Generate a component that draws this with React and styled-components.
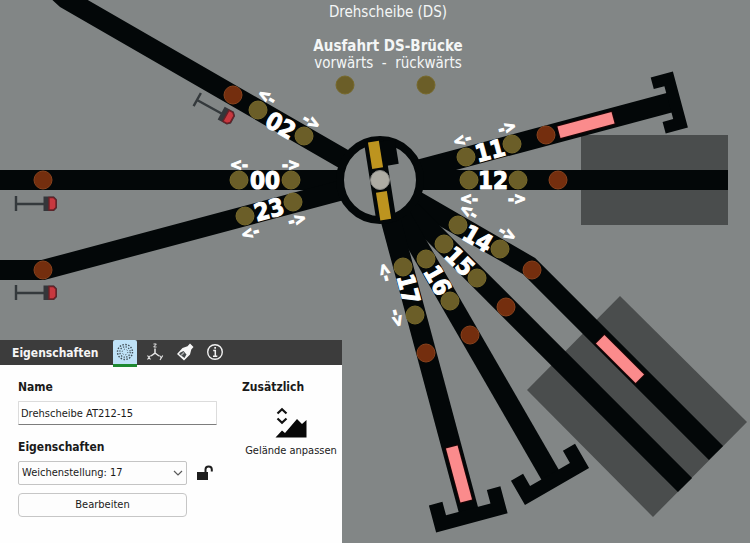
import React from 'react'
import styled, { createGlobalStyle } from 'styled-components'


const CENTER = { x: 380, y: 180 }

const tracks = [
  '52,-14 66,-1 380,180',
  '0,180 380,180',
  '0,270 43,270 380,180',
  '380,180 672,102',
  '380,180 728,180',
  '380,180 529,266 716,453',
  '380,180 685,485',
  '380,180 552,478',
  '380,180 469,512',
]

const greenSpots = [
  [345, 85], [426, 85],
  [258, 110], [304, 136],
  [239, 180], [291, 180],
  [245, 216], [293, 202],
  [466, 157], [512, 144],
  [469, 180], [518, 180],
  [458, 225], [500, 249],
  [444, 244], [477, 278],
  [426, 259], [450, 301],
  [403, 267], [415, 315],
]

const redSpots = [
  [233, 95], [43, 180], [43, 270], [546, 135], [558, 180],
  [532, 270], [506, 307], [470, 335], [426, 353],
]

const numbers = [
  { text: '02', x: 281, y: 125, turn: 30 },
  { text: '00', x: 265, y: 180, turn: 0 },
  { text: '23', x: 269, y: 209, turn: -15 },
  { text: '11', x: 490, y: 150, turn: -15 },
  { text: '12', x: 493, y: 180, turn: 0 },
  { text: '14', x: 478, y: 238, turn: 30 },
  { text: '15', x: 460, y: 261, turn: 45 },
  { text: '16', x: 438, y: 280, turn: 60 },
  { text: '17', x: 409, y: 289, turn: 75 },
]

const arrows = [
  { text: '<-', x: 267, y: 96, turn: 30 },
  { text: '->', x: 312, y: 121, turn: 30 },
  { text: '<-', x: 239, y: 164, turn: 0 },
  { text: '->', x: 291, y: 164, turn: 0 },
  { text: '<-', x: 250, y: 232, turn: -15 },
  { text: '->', x: 297, y: 219, turn: -15 },
  { text: '<-', x: 462, y: 139, turn: -15 },
  { text: '->', x: 507, y: 127, turn: -15 },
  { text: '<-', x: 469, y: 198, turn: 0 },
  { text: '->', x: 517, y: 198, turn: 0 },
  { text: '<-', x: 469, y: 211, turn: 30 },
  { text: '->', x: 508, y: 233, turn: 30 },
  { text: '<-', x: 386, y: 272, turn: 75 },
  { text: '->', x: 398, y: 318, turn: 75 },
]

const wagons = [
  { x: 586, y: 125, turn: -15 },
  { x: 620, y: 359, turn: 45 },
  { x: 459, y: 474, turn: 75 },
]

const signals = [
  { x: 16, y: 204, turn: 0 },
  { x: 16, y: 293, turn: 0 },
  { x: 197, y: 100, turn: 29 },
]

// end of a track: d is the distance from the turntable, half the width of the bar
function Buffer({ turn, d, half, lip, thick }) {
  const path = `M${d - lip} ${-half}H${d}V${half}H${d - lip}V${half - thick}H${d - thick}V${thick - half}H${d - lip}Z`
  return <path d={path} fill='#030708' transform={`translate(${CENTER.x} ${CENTER.y}) rotate(${turn})`} />
}

function Signal({ x, y, turn }) {
  return (
    <g transform={`translate(${x} ${y}) rotate(${turn})`}>
      <path d='M0 -8V7M0 0H28' stroke='#34393c' strokeWidth='2.4' fill='none' />
      <path d='M27.500 -7.500H38L41 -4.500V4L38 7H27.500Z' fill='#34363a' />
      <path d='M33 -6.500H37.500L40 -4V3.500L37.500 6H33Z' fill='#c8383f' stroke='#6b2026' strokeWidth='1.400' />
    </g>
  )
}

function Turntable() {
  return (
    <g transform={`translate(${CENTER.x} ${CENTER.y})`}>
      <circle r='40' fill='#828686' stroke='#030708' strokeWidth='8' />
      <g transform='rotate(-9)'>
        <rect x='-10' y='-40' width='20' height='80' fill='#030708' />
        <rect x='5' y='-38' width='16' height='25' fill='#030708' />
        <rect x='-6' y='-39' width='11' height='27' fill='#bd941f' />
        <rect x='-6' y='12' width='11' height='28' fill='#bd941f' />
      </g>
      <circle r='9.500' fill='#aeaca4' stroke='#8a8985' strokeWidth='1' />
    </g>
  )
}

function TrackPlan() {
  return (
    <Plan viewBox='0 0 750 543'>
      <rect x='581' y='135' width='147' height='90' fill='#4a4d4d' />
      <polygon points='620,296 747,422 653,517 527,390' fill='#4a4d4d' />
      {tracks.map((points) => (
        <Rail key={points} points={points} />
      ))}
      <Buffer turn={-15} d={311} half={29} lip={23} thick={12} />
      <Buffer turn={60} d={354} half={37} lip={28} thick={14} />
      <Buffer turn={75} d={355} half={37} lip={28} thick={14} />
      <Turntable />
      {wagons.map((w) => (
        <rect
          key={w.x} x='-28' y='-6' width='56' height='12' fill='#fb8b8c' stroke='#1f0506' strokeWidth='2'
          paintOrder='stroke' transform={`translate(${w.x} ${w.y}) rotate(${w.turn})`}
        />
      ))}
      {redSpots.map(([x, y]) => (
        <circle key={`${x}-${y}`} cx={x} cy={y} r='9' fill='#742e0e' stroke='#87421d' strokeWidth='1' />
      ))}
      {greenSpots.map(([x, y]) => (
        <circle key={`${x}-${y}`} cx={x} cy={y} r='9' fill='#6b5e28' stroke='#77692b' strokeWidth='1' />
      ))}
      {signals.map((s) => (
        <Signal key={`${s.x}-${s.y}`} {...s} />
      ))}
      {numbers.map((n) => (
        <Marking key={n.text} $size={24} y='9' transform={`translate(${n.x} ${n.y}) rotate(${n.turn})`}>
          {n.text}
        </Marking>
      ))}
      {arrows.map((a) => (
        <Marking key={`${a.x}-${a.y}`} $size={16} y='6' transform={`translate(${a.x} ${a.y}) rotate(${a.turn})`}>
          {a.text}
        </Marking>
      ))}
      <PlanText $size={15} x='388' y='17'>Drehscheibe (DS)</PlanText>
      <PlanText $size={15} $bold x='388' y='51'>Ausfahrt DS-Brücke</PlanText>
      <PlanText $size={15} x='388' y='68'>{'vorwärts  -  rückwärts'}</PlanText>
    </Plan>
  )
}

function DiscIcon() {
  return (
    <svg width='20' height='20' viewBox='0 0 20 20' fill='none' stroke='#3f4c54'>
      <circle cx='10' cy='10' r='7.500' strokeWidth='1.400' strokeDasharray='1.500 1.450' />
      <circle cx='10' cy='10' r='5.200' strokeWidth='1.200' strokeDasharray='1.300 1.420' />
      <circle cx='10' cy='10' r='2.800' strokeWidth='1' strokeDasharray='1.100 1.830' />
    </svg>
  )
}

function AxesIcon() {
  return (
    <svg width='20' height='20' viewBox='0 0 20 20' fill='none' stroke='#e6e6e6' strokeWidth='1.200'>
      <path d='M10 6.500V11L6 14M10 11L14 14' strokeWidth='1.500' />
      <path d='M8.500 2H11.300L8.700 5H11.500' strokeWidth='1' />
      <path d='M2.500 13.500L5.500 17.500M5.500 13.500L2.500 17.500M14.500 13.500L16 15.500M17.700 13.500L15 18' />
    </svg>
  )
}

function TubeIcon() {
  return (
    <svg width='20' height='20' viewBox='0 0 20 20'>
      <path d='M15 1.500L18.500 5L16.300 7.500L15 12.500L9 18.500L2 12L7.500 6L12.500 4.300Z' fill='#f6f6f6' />
      <path d='M5.300 10.500L8.500 9L11.500 12.500L9.500 16L4 12Z' fill='#44484a' />
      <path d='M6 13.500L9 10.500' stroke='#a4a6a7' strokeWidth='1.500' />
    </svg>
  )
}

function InfoIcon() {
  return (
    <svg width='20' height='20' viewBox='0 0 20 20' fill='none' stroke='#f0f0f0'>
      <circle cx='10' cy='10' r='7.300' strokeWidth='1.400' />
      <path d='M8.200 8.500H10.300V14M8 14.300H12.300' strokeWidth='1.500' />
      <path d='M9.300 5.800H11' strokeWidth='1.800' />
    </svg>
  )
}

function LockIcon() {
  return (
    <svg width='18' height='18' viewBox='0 0 18 18'>
      <rect x='1' y='8' width='11' height='8' fill='#1d1d1d' />
      <path d='M9.500 8.500V5.500C9.500 1.500 15.800 1.500 15.800 5.500V7.500' fill='none' stroke='#1d1d1d' strokeWidth='2' />
    </svg>
  )
}

function TerrainIcon() {
  return (
    <svg width='32' height='32' viewBox='0 0 32 32'>
      <path d='M2.500 6.500L7 2.300L11.500 6.500M2.500 11.500L7 15.700L11.500 11.500' fill='none' stroke='#111' strokeWidth='2.200' />
      <path d='M0.500 30.500L7 23.500L10 26L22 12L27 17L31.500 13V30.500Z' fill='#080808' />
    </svg>
  )
}

function ChevronIcon() {
  return (
    <svg width='10' height='6' viewBox='0 0 10 6'>
      <path d='M1 1L5 5L9 1' fill='none' stroke='#5a5a5a' strokeWidth='1.200' />
    </svg>
  )
}

function PropertiesPanel() {
  return (
    <Panel>
      <PanelHeader>
        <PanelTitle>Eigenschaften</PanelTitle>
        <TabButton $active aria-label='Objekt'><DiscIcon /></TabButton>
        <TabButton aria-label='Position'><AxesIcon /></TabButton>
        <TabButton aria-label='Farbe'><TubeIcon /></TabButton>
        <TabButton aria-label='Info'><InfoIcon /></TabButton>
      </PanelHeader>
      <PanelBody>
        <Fields>
          <FieldLabel htmlFor='name'>Name</FieldLabel>
          <NameInput id='name' defaultValue='Drehscheibe AT212-15' />
          <FieldLabel htmlFor='position'>Eigenschaften</FieldLabel>
          <SelectRow>
            <SelectBox>
              <Select id='position' defaultValue='17'>
                <option value='17'>Weichenstellung: 17</option>
              </Select>
              <ChevronIcon />
            </SelectBox>
            <IconButton aria-label='Sperre'><LockIcon /></IconButton>
          </SelectRow>
          <EditButton>Bearbeiten</EditButton>
        </Fields>
        <Extras>
          <ExtrasTitle>Zusätzlich</ExtrasTitle>
          <ToolButton>
            <TerrainIcon />
            Gelände anpassen
          </ToolButton>
        </Extras>
      </PanelBody>
    </Panel>
  )
}

function App() {
  return (
    <Stage>
      <GlobalStyle />
      <TrackPlan />
      <PropertiesPanel />
    </Stage>
  )
}

const GlobalStyle = createGlobalStyle`
  * {
    box-sizing: border-box;
  }

  body {
    margin: 0;
    background: #828686;
    font-family: 'DejaVu Sans Condensed', 'DejaVu Sans', sans-serif;
    font-size: 11px;
    line-height: 16px;
    color: #1a1a1a;
  }

  button, input, select {
    font: inherit;
    color: inherit;
  }
`

const Stage = styled.main`
  display: grid;
  background: #828686;

  > * {
    grid-area: 1 / 1;
  }
`

const Plan = styled.svg`
  display: block;
  width: 100%;
  height: auto;
`

const Rail = styled.polyline`
  fill: none;
  stroke: #030708;
  stroke-width: 20px;
`

const PlanText = styled.text`
  fill: #f4f6f6;
  font-size: ${(props) => props.$size}px;
  font-weight: ${(props) => (props.$bold ? 'bold' : 'normal')};
  text-anchor: middle;
  white-space: pre;
`

const Marking = styled(PlanText)`
  font-weight: bold;
  fill: #fff;
  stroke: #fff;
  stroke-width: 1px;
`

const Panel = styled.section`
  align-self: end;
  justify-self: start;
  background: #fefefe;
`

const PanelHeader = styled.header`
  display: flex;
  align-items: center;
  gap: 6px;
  height: 25px;
  padding-left: 12px;
  background: #3c3c3c;
`

const PanelTitle = styled.h2`
  margin: 0 9px 0 0;
  color: #f5f5f5;
  font-size: 12px;
  line-height: 16px;
`

const TabButton = styled.button`
  display: flex;
  justify-content: center;
  align-items: center;
  width: 24px;
  height: 27px;
  align-self: flex-start;
  padding: 0;
  border: 0;
  border-bottom: 3px solid ${(props) => (props.$active ? '#1f8a32' : 'transparent')};
  border-radius: 2px 2px 0 0;
  background: ${(props) => (props.$active ? '#bfe2f7' : 'none')};
`

const PanelBody = styled.div`
  display: flex;
  gap: 25px;
  padding: 14px 2px 26px 18px;
`

const Fields = styled.div`
  display: flex;
  flex-direction: column;
  width: 199px;
`

const FieldLabel = styled.label`
  margin-bottom: 6px;
  font-size: 12px;
  font-weight: bold;
`

const NameInput = styled.input`
  height: 24px;
  margin-bottom: 14px;
  padding: 0 2px;
  border: 1px solid #dcdcdc;
  border-bottom-color: #7d7d7d;
  border-radius: 1px;
  background: #fff;
`

const SelectRow = styled.div`
  display: flex;
  align-items: center;
  gap: 9px;
  margin-bottom: 8px;
`

const SelectBox = styled.div`
  display: grid;
  align-items: center;
  width: 169px;

  > * {
    grid-area: 1 / 1;
  }

  > svg {
    justify-self: end;
    margin-right: 4px;
    pointer-events: none;
  }
`

const Select = styled.select`
  appearance: none;
  width: 100%;
  height: 24px;
  padding: 0 18px 0 3px;
  border: 1px solid #c4c4c4;
  border-radius: 2px;
  background: #fdfdfd;
`

const IconButton = styled.button`
  display: flex;
  padding: 0;
  border: 0;
  background: none;
`

const EditButton = styled.button`
  width: 169px;
  height: 24px;
  border: 1px solid #c6c6c6;
  border-radius: 4px;
  background: #fdfdfd;
`

const Extras = styled.div`
  width: 98px;
`

const ExtrasTitle = styled.h3`
  margin: 0 0 12px;
  font-size: 12px;
  line-height: 16px;
`

const ToolButton = styled.button`
  display: flex;
  flex-direction: column;
  align-items: center;
  gap: 4px;
  width: 100%;
  padding: 0;
  border: 0;
  background: none;
  white-space: nowrap;
`


export default App
